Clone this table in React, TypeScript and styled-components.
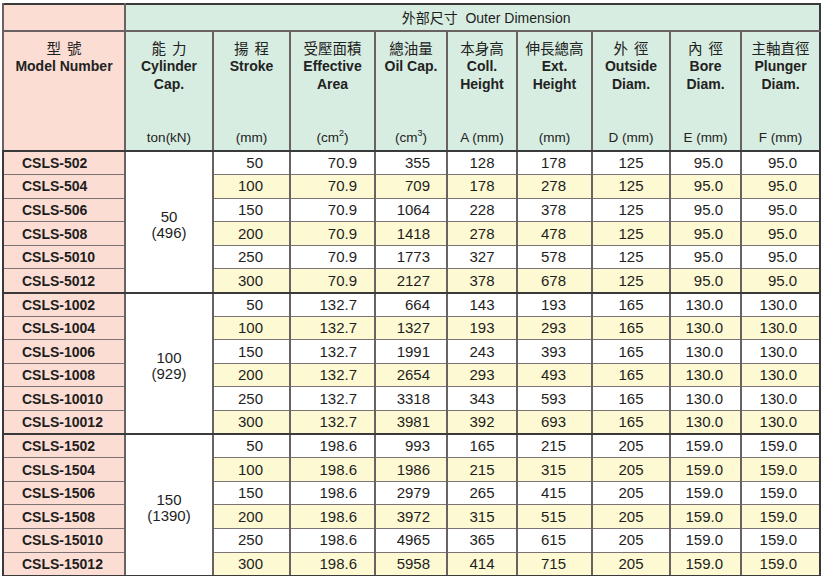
import React from "react";
import styled, { createGlobalStyle } from "styled-components";

const Global = createGlobalStyle`
  html, body { margin: 0; padding: 0; background: #ffffff; }
  body { font-family: "Liberation Sans", Arial, sans-serif; color: #1e1e1e; }
`;

const PINK = "#fbddd4";
const GREEN = "#d8ede1";
const YELLOW = "#fdf9d3";
const DARK = "#3a3a3a";
const COL = "#6a6262";
const ROW = "#7c7474";

const Wrap = styled.div`
  padding: 3px 0 0 2px;
`;

const Table = styled.table`
  border-collapse: collapse;
  table-layout: fixed;
  width: 819px;
  border: 2px solid ${DARK};
  font-family: "Liberation Sans", Arial, sans-serif;
`;

const TopCell = styled.td<{ $bg: string; $pl: number }>`
  height: 25px;
  padding: 0 0 0 ${(p) => p.$pl}px;
  background: ${(p) => p.$bg};
  border-left: 2px solid ${COL};
  border-bottom: 2px solid ${COL};
  text-align: center;
  font-size: 14px;
  line-height: 18px;
  vertical-align: middle;
`;

const Cjk = styled.span`
  font-family: "Liberation Sans", "Noto Sans CJK TC", sans-serif;
`;

const HeadCell = styled.th<{ $bg: string }>`
  height: 118px;
  padding: 0;
  background: ${(p) => p.$bg};
  border-left: 2px solid ${COL};
  border-bottom: 2px solid ${DARK};
  vertical-align: top;
  font-weight: normal;
`;

const HeadInner = styled.div`
  display: flex;
  flex-direction: column;
  align-items: center;
  height: 118px;
  box-sizing: border-box;
  padding: 7px 0 3px;
`;

const HeadCjk = styled.div`
  font-family: "Noto Sans CJK TC", sans-serif;
  font-size: 14.5px;
  line-height: 18px;
  height: 18px;
  white-space: pre;
  word-spacing: 3px;
  color: #222;
`;

const HeadEn = styled.div`
  font-size: 14px;
  font-weight: bold;
  line-height: 18px;
  color: #222;
  white-space: nowrap;
`;

const HeadUnit = styled.div`
  margin-top: auto;
  font-size: 13.5px;
  line-height: 18px;
  color: #222;
  white-space: nowrap;
  sup {
    font-size: 9px;
    line-height: 0;
    vertical-align: 6px;
  }
`;

const Row = styled.tr`
  height: 23.6px;
`;

const ModelCell = styled.td<{ $groupEnd: boolean }>`
  background: ${PINK};
  padding: 0 0 0 18px;
  font-size: 14px;
  font-weight: bold;
  line-height: 16px;
  border-bottom: ${(p) => (p.$groupEnd ? `2px solid ${DARK}` : `1.5px solid ${ROW}`)};
  white-space: nowrap;
  color: #1e1e1e;
`;

const CapCell = styled.td`
  background: #ffffff;
  border-left: 2px solid ${COL};
  border-bottom: 2px solid ${DARK};
  text-align: center;
  vertical-align: middle;
  padding-top: 7px;
  font-size: 15px;
  line-height: 16px;
`;

const DataCell = styled.td<{ $alt: boolean; $groupEnd: boolean; $align: string; $pr: number }>`
  background: ${(p) => (p.$alt ? YELLOW : "#ffffff")};
  border-left: 2px solid ${COL};
  border-bottom: ${(p) => (p.$groupEnd ? `2px solid ${DARK}` : `1px solid ${ROW}`)};
  text-align: ${(p) => p.$align};
  padding: 0 ${(p) => p.$pr}px 0 0;
  font-size: 15px;
  line-height: 16px;
  white-space: nowrap;
  color: #1e1e1e;
`;

const widths = [122, 88, 77, 85, 72, 70, 75, 78, 71, 79];

type Col = { cjk: string; en: string[]; unit: React.ReactNode };
const headers: Col[] = [
  { cjk: "能 力", en: ["Cylinder", "Cap."], unit: "ton(kN)" },
  { cjk: "揚 程", en: ["Stroke"], unit: "(mm)" },
  { cjk: "受壓面積", en: ["Effective", "Area"], unit: <>(cm<sup>2</sup>)</> },
  { cjk: "總油量", en: ["Oil Cap."], unit: <>(cm<sup>3</sup>)</> },
  { cjk: "本身高", en: ["Coll.", "Height"], unit: "A (mm)" },
  { cjk: "伸長總高", en: ["Ext.", "Height"], unit: "(mm)" },
  { cjk: "外 徑", en: ["Outside", "Diam."], unit: "D (mm)" },
  { cjk: "內 徑", en: ["Bore", "Diam."], unit: "E (mm)" },
  { cjk: "主軸直徑", en: ["Plunger", "Diam."], unit: "F (mm)" },
];

type Group = {
  cap: string;
  kn: string;
  area: string;
  od: string;
  bore: string;
  plunger: string;
  rows: [string, string, string, string, string][];
};

const groups: Group[] = [
  {
    cap: "50",
    kn: "(496)",
    area: "70.9",
    od: "125",
    bore: "95.0",
    plunger: "95.0",
    rows: [
      ["CSLS-502", "50", "355", "128", "178"],
      ["CSLS-504", "100", "709", "178", "278"],
      ["CSLS-506", "150", "1064", "228", "378"],
      ["CSLS-508", "200", "1418", "278", "478"],
      ["CSLS-5010", "250", "1773", "327", "578"],
      ["CSLS-5012", "300", "2127", "378", "678"],
    ],
  },
  {
    cap: "100",
    kn: "(929)",
    area: "132.7",
    od: "165",
    bore: "130.0",
    plunger: "130.0",
    rows: [
      ["CSLS-1002", "50", "664", "143", "193"],
      ["CSLS-1004", "100", "1327", "193", "293"],
      ["CSLS-1006", "150", "1991", "243", "393"],
      ["CSLS-1008", "200", "2654", "293", "493"],
      ["CSLS-10010", "250", "3318", "343", "593"],
      ["CSLS-10012", "300", "3981", "392", "693"],
    ],
  },
  {
    cap: "150",
    kn: "(1390)",
    area: "198.6",
    od: "205",
    bore: "159.0",
    plunger: "159.0",
    rows: [
      ["CSLS-1502", "50", "993", "165", "215"],
      ["CSLS-1504", "100", "1986", "215", "315"],
      ["CSLS-1506", "150", "2979", "265", "415"],
      ["CSLS-1508", "200", "3972", "315", "515"],
      ["CSLS-15010", "250", "4965", "365", "615"],
      ["CSLS-15012", "300", "5958", "414", "715"],
    ],
  },
];

// alignment per data column: stroke, area, oil, coll, ext, od, bore, plunger
const aligns: [string, number][] = [
  ["right", 26],
  ["right", 17],
  ["right", 16],
  ["center", 0],
  ["center", 2],
  ["center", 0],
  ["right", 17],
  ["right", 22],
];

export default function App() {
  return (
    <Wrap>
      <Global />
      <Table>
        <colgroup>
          {widths.map((w, i) => (
            <col key={i} style={{ width: w }} />
          ))}
        </colgroup>
        <thead>
          <tr>
            <TopCell $bg={PINK} $pl={0} />
            <TopCell $bg={GREEN} $pl={27} colSpan={9}>
              <Cjk>外部尺寸</Cjk>&nbsp; Outer Dimension
            </TopCell>
          </tr>
          <tr>
            <HeadCell $bg={PINK}>
              <HeadInner>
                <HeadCjk>型 號</HeadCjk>
                <HeadEn>Model Number</HeadEn>
              </HeadInner>
            </HeadCell>
            {headers.map((h, i) => (
              <HeadCell key={i} $bg={GREEN}>
                <HeadInner>
                  <HeadCjk>{h.cjk}</HeadCjk>
                  {h.en.map((e) => (
                    <HeadEn key={e}>{e}</HeadEn>
                  ))}
                  <HeadUnit>{h.unit}</HeadUnit>
                </HeadInner>
              </HeadCell>
            ))}
          </tr>
        </thead>
        <tbody>
          {groups.map((g) =>
            g.rows.map((r, ri) => {
              const alt = ri % 2 === 1;
              const end = ri === g.rows.length - 1;
              const vals = [r[1], g.area, r[2], r[3], r[4], g.od, g.bore, g.plunger];
              return (
                <Row key={r[0]}>
                  <ModelCell $groupEnd={end}>{r[0]}</ModelCell>
                  {ri === 0 && (
                    <CapCell rowSpan={g.rows.length}>
                      {g.cap}
                      <br />
                      {g.kn}
                    </CapCell>
                  )}
                  {vals.map((v, vi) => (
                    <DataCell
                      key={vi}
                      $alt={alt}
                      $groupEnd={end}
                      $align={aligns[vi][0]}
                      $pr={aligns[vi][1]}
                    >
                      {v}
                    </DataCell>
                  ))}
                </Row>
              );
            })
          )}
        </tbody>
      </Table>
    </Wrap>
  );
}
